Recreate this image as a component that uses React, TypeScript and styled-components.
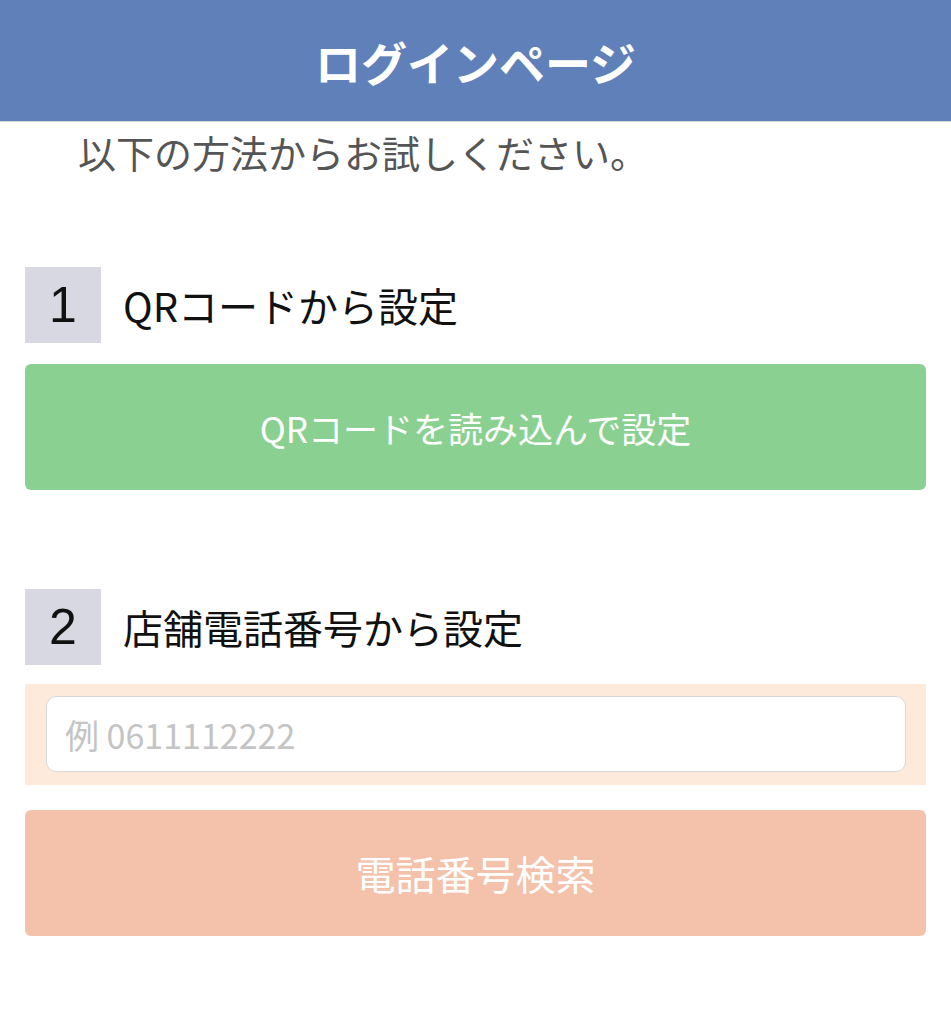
import React, { useState } from 'react'
import styled, { createGlobalStyle } from 'styled-components'

const GlobalStyle = createGlobalStyle`
  html, body {
    margin: 0;
    padding: 0;
    background: #ffffff;
  }
  body {
    font-family: "Noto Sans CJK JP", "Noto Sans", sans-serif;
  }
  * {
    box-sizing: border-box;
  }
`

const Page = styled.div`
  width: 100%;
  min-height: 100vh;
  background: #ffffff;
`

const Header = styled.header`
  height: 122px;
  background-color: #6080b9;
  border-bottom: 1px solid #d4d4d8;
  display: flex;
  align-items: center;
  justify-content: center;

  h1 {
    margin: 0;
    color: #ffffff;
    font-size: 46px;
    font-weight: 700;
    line-height: 1;
  }
`

const Lead = styled.p`
  margin: 4px 0 0 78px;
  font-size: 38px;
  line-height: 52px;
  color: #555555;
`

const Content = styled.main`
  padding: 0 25px;
  display: flex;
  flex-direction: column;
`

const SectionHead = styled.div<{ top: number }>`
  display: flex;
  align-items: center;
  gap: 22px;
  margin-top: ${props => props.top}px;
`

const StepNumber = styled.div`
  width: 76px;
  height: 76px;
  background-color: #d8d8e3;
  display: flex;
  align-items: center;
  justify-content: center;
  font-family: "Liberation Sans", "Noto Sans", sans-serif;
  font-size: 50px;
  color: #111111;
  line-height: 1;
`

const SectionTitle = styled.h2`
  margin: 0;
  font-size: 40px;
  font-weight: 400;
  color: #111111;
  line-height: 1;
`

const ButtonRow = styled.div<{ top: number }>`
  margin-top: ${props => props.top}px;
`

const ActionButton = styled.button<{ bg: string; size: number }>`
  width: 100%;
  height: 126px;
  border: none;
  border-radius: 6px;
  background-color: ${props => props.bg};
  color: #ffffff;
  font-family: "Noto Sans CJK JP", "Noto Sans", sans-serif;
  font-size: ${props => props.size}px;
  font-weight: 400;
  display: flex;
  align-items: center;
  justify-content: center;
  cursor: pointer;
`

const InputPanel = styled.div`
  margin-top: 19px;
  background-color: #fdeada;
  padding: 12px 20px 13px 21px;
`

const PhoneInput = styled.input`
  width: 100%;
  height: 76px;
  border: 1px solid #d8d8d8;
  border-radius: 10px;
  background: #ffffff;
  padding: 0 18px;
  font-family: "Noto Sans CJK JP", "Noto Sans", sans-serif;
  font-size: 34px;
  color: #333333;
  outline: none;

  &::placeholder {
    color: #c4c4c4;
  }
`

function App() {
  const [phone, setPhone] = useState('')

  return (
    <Page>
      <GlobalStyle />
      <Header>
        <h1>ログインページ</h1>
      </Header>
      <Lead>以下の方法からお試しください。</Lead>

      <Content>
        <SectionHead top={89}>
          <StepNumber>1</StepNumber>
          <SectionTitle>QRコードから設定</SectionTitle>
        </SectionHead>
        <ButtonRow top={21}>
          <ActionButton bg="#8ad191" size={35}>QRコードを読み込んで設定</ActionButton>
        </ButtonRow>

        <SectionHead top={99}>
          <StepNumber>2</StepNumber>
          <SectionTitle>店舗電話番号から設定</SectionTitle>
        </SectionHead>
        <InputPanel>
          <PhoneInput
            type="tel"
            placeholder="例 0611112222"
            value={phone}
            onChange={e => setPhone(e.target.value)}
          />
        </InputPanel>
        <ButtonRow top={25}>
          <ActionButton bg="#f4c1ab" size={40}>電話番号検索</ActionButton>
        </ButtonRow>
      </Content>
    </Page>
  )
}

export default App
